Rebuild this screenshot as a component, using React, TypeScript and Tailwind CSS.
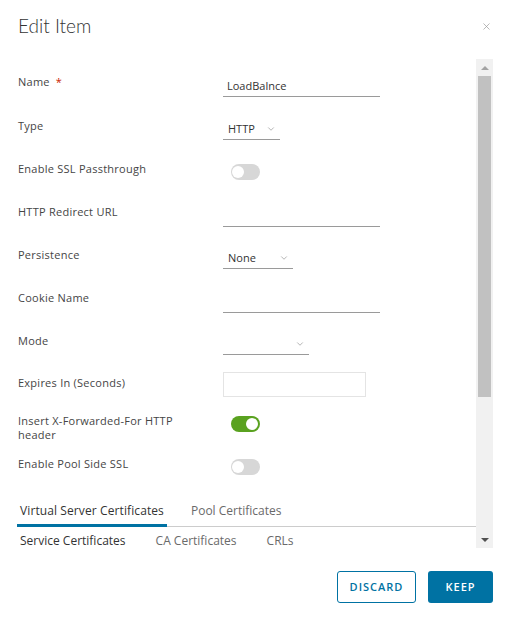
import { ChevronDown, X } from 'lucide-react'

type Row =
  | { kind: 'input'; label: string; value?: string; required?: boolean; h: string }
  | { kind: 'select'; label: string; value: string; w: string; h: string }
  | { kind: 'toggle'; label: string; on?: boolean; h: string }
  | { kind: 'box'; label: string; h: string }

const rows: Row[] = [
  { kind: 'input', label: 'Name', value: 'LoadBalnce', required: true, h: 'h-[44px]' },
  { kind: 'select', label: 'Type', value: 'HTTP', w: 'w-[57px]', h: 'h-[43px]' },
  { kind: 'toggle', label: 'Enable SSL Passthrough', h: 'h-[43px]' },
  { kind: 'input', label: 'HTTP Redirect URL', h: 'h-[43px]' },
  { kind: 'select', label: 'Persistence', value: 'None', w: 'w-[70px]', h: 'h-[43px]' },
  { kind: 'input', label: 'Cookie Name', h: 'h-[43px]' },
  { kind: 'select', label: 'Mode', value: '', w: 'w-[86px]', h: 'h-[42px]' },
  { kind: 'box', label: 'Expires In (Seconds)', h: 'h-[38px]' },
  { kind: 'toggle', label: 'Insert X-Forwarded-For HTTP header', on: true, h: 'h-[43px]' },
  { kind: 'toggle', label: 'Enable Pool Side SSL', h: 'h-[45px]' },
]

function Toggle({ on }: { on?: boolean }) {
  return (
    <div
      className={`ml-[8px] mt-[2px] w-[29px] h-[16px] rounded-full relative ${
        on ? 'bg-[#5aa220]' : 'bg-[#d7d7d7]'
      }`}
    >
      <div
        className={`absolute top-[2px] w-[12px] h-[12px] rounded-full bg-white ${
          on ? 'right-[2px]' : 'left-[1px]'
        }`}
      />
    </div>
  )
}

function Control({ row }: { row: Row }) {
  if (row.kind === 'input')
    return (
      <div className="w-[157px] h-[22px] border-b border-[#9a9a9a] pl-[4px] text-[11px] leading-[22px] text-[#333]">
        {row.value}
      </div>
    )
  if (row.kind === 'select')
    return (
      <div
        className={`${row.w} h-[21px] border-b border-[#9a9a9a] pl-[5px] pr-[4px] flex items-center justify-between text-[11px] text-[#333]`}
      >
        <span>{row.value}</span>
        <ChevronDown className="w-[10px] h-[10px] text-[#888]" strokeWidth={1.5} />
      </div>
    )
  if (row.kind === 'box')
    return <div className="-mt-[4px] w-[143px] h-[25px] border border-[#e4e4e4]" />
  return <Toggle on={row.on} />
}

export default function App() {
  return (
    <div
      className="w-[512px] h-[621px] bg-white flex flex-col"
      style={{ fontFamily: '"Open Sans", Lato, sans-serif' }}
    >
      {/* Header */}
      <div className="h-[59px] flex items-start justify-between pl-[18px] pr-[20px] pt-[12px]">
        <h1
          className="text-[19px] font-light text-[#333] leading-[28px]"
          style={{ fontFamily: 'Lato, sans-serif' }}
        >
          Edit Item
        </h1>
        <X className="mt-[9px] w-[11px] h-[11px] text-[#999]" strokeWidth={1.5} />
      </div>

      {/* Body */}
      <div className="h-[489px] flex pr-[19px]">
        <div className="flex-1 overflow-hidden">
          <div className="pl-[18px] pt-[16px]">
            {rows.map((row) => (
              <div key={row.label} className={`flex items-start ${row.h}`}>
                <div className="w-[205px] pr-[45px] text-[11px] leading-[14px] tracking-[0.25px] text-[#454545]">
                  {row.label}
                  {'required' in row && row.required && (
                    <span className="text-[#c92100] ml-[6px]">*</span>
                  )}
                </div>
                <Control row={row} />
              </div>
            ))}
          </div>

          {/* Certificate tabs */}
          <div className="ml-[17px] flex border-b border-[#ccc] text-[12px] leading-[18px]">
            <div className="px-[3px] pb-[4px] border-b-[3px] border-[#0072a3] -mb-px text-[#333] tracking-[0.1px]">
              Virtual Server Certificates
            </div>
            <div className="ml-[21px] px-[3px] pb-[4px] text-[#6a6a6a]">Pool Certificates</div>
          </div>
          <div className="ml-[20px] mt-[8px] flex gap-[30px] text-[12px] leading-[12px]">
            <span className="text-[#333]">Service Certificates</span>
            <span className="text-[#6a6a6a]">CA Certificates</span>
            <span className="text-[#6a6a6a]">CRLs</span>
          </div>
        </div>

        {/* Scrollbar */}
        <div className="w-[17px] bg-[#f1f1f1] flex flex-col">
          <div className="h-[17px] flex items-center justify-center">
            <div className="w-0 h-0 border-x-[4px] border-x-transparent border-b-[4px] border-b-[#a3a3a3]" />
          </div>
          <div className="mx-[2px] h-[321px] bg-[#c1c1c1]" />
          <div className="flex-1" />
          <div className="h-[17px] flex items-center justify-center">
            <div className="w-0 h-0 border-x-[4px] border-x-transparent border-t-[4px] border-t-[#505050]" />
          </div>
        </div>
      </div>

      {/* Footer */}
      <div className="flex justify-end gap-[12px] pr-[19px] pt-[23px]">
        <button className="w-[79px] h-[32px] rounded-[3px] border border-[#0072a3] text-[#0072a3] text-[11px] font-semibold tracking-[1px]">
          DISCARD
        </button>
        <button className="w-[65px] h-[32px] rounded-[3px] bg-[#0072a3] text-white text-[11px] font-semibold tracking-[1px]">
          KEEP
        </button>
      </div>
    </div>
  )
}
